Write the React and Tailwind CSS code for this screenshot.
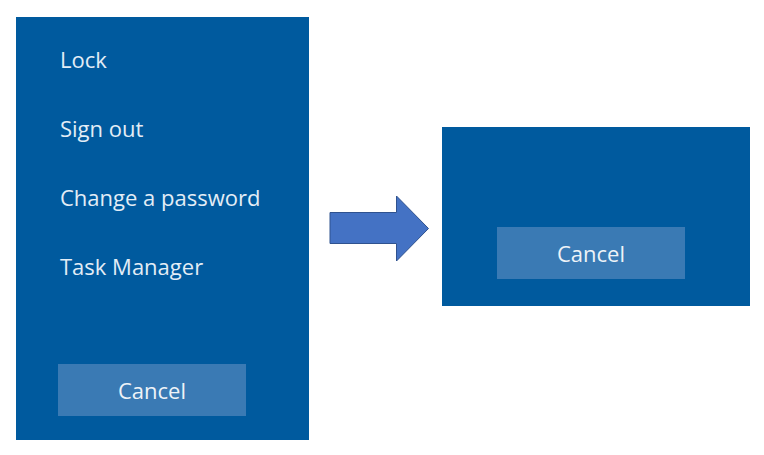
import React from 'react';

const font = { fontFamily: '"Open Sans", "Noto Sans", sans-serif' };

const menuItems = ['Lock', 'Sign out', 'Change a password', 'Task Manager'];

const CancelButton = () => (
  <button className="w-[188px] h-[52px] bg-[#3a7ab4] text-[#eef3f8] text-[22px] flex items-center justify-center">
    Cancel
  </button>
);

const Arrow = () => (
  <svg width="101" height="67" viewBox="0 0 101 67" className="block">
    <path
      d="M1 17.5 H67.5 V1 L99.5 33.5 L67.5 66 V48.5 H1 Z"
      fill="#4472c4"
      stroke="#2f528f"
      strokeWidth="1"
    />
  </svg>
);

const App = () => {
  return (
    <div className="w-[764px] h-[455px] bg-white flex items-start" style={font}>
      <div className="ml-[16px] mt-[17px] w-[293px] h-[423px] bg-[#005a9e] flex flex-col pt-[8px]">
        {menuItems.map((item) => (
          <div key={item} className="h-[69px] flex items-center pl-[44px] text-[22px] text-[#e3edf6]">
            {item}
          </div>
        ))}
        <div className="mt-[63px] pl-[42px]">
          <CancelButton />
        </div>
      </div>

      <div className="ml-[20px] mt-[195px]">
        <Arrow />
      </div>

      <div className="ml-[12px] mt-[127px] w-[308px] h-[179px] bg-[#005a9e] pt-[100px] pl-[55px]">
        <CancelButton />
      </div>
    </div>
  );
};

export default App;
